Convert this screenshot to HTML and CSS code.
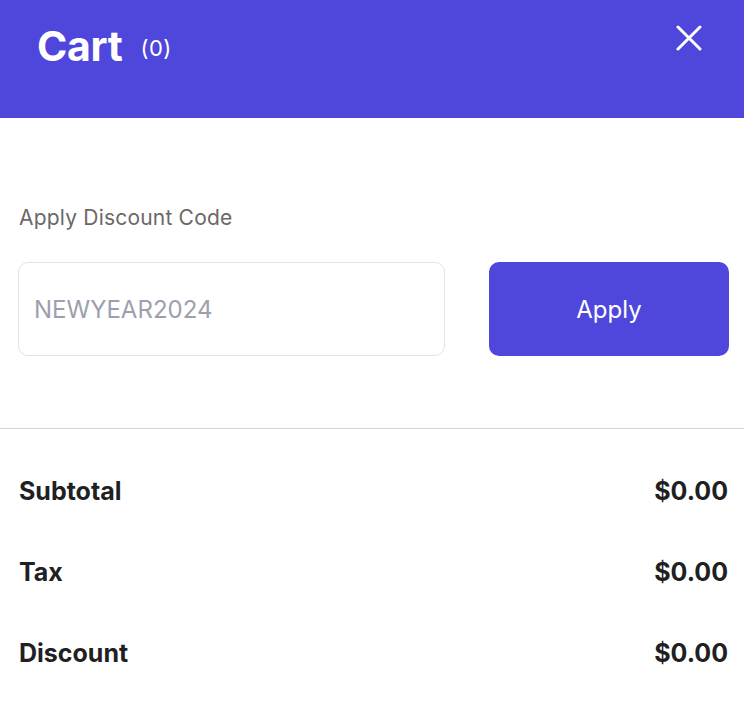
FILE: index.html
```html
<!DOCTYPE html>
<html lang="en">
<head>
<meta charset="utf-8">
<title>Cart</title>
<link rel="stylesheet" href="styles.css">
</head>
<body>
<div class="cart">
  <header class="cart-header">
    <div class="title">
      <h1>Cart</h1>
      <span class="count">(0)</span>
    </div>
    <button class="close" aria-label="Close">
      <svg width="26" height="26" viewBox="0 0 26 26"><path d="M2 2 L24 24 M24 2 L2 24" stroke="#fff" stroke-width="3" stroke-linecap="round"/></svg>
    </button>
  </header>
  <section class="discount">
    <label class="label" for="code">Apply Discount Code</label>
    <div class="discount-row">
      <input id="code" class="code-input" type="text" placeholder="NEWYEAR2024">
      <button class="apply">Apply</button>
    </div>
  </section>
  <section class="summary">
    <div class="row"><span>Subtotal</span><span>$0.00</span></div>
    <div class="row"><span>Tax</span><span>$0.00</span></div>
    <div class="row"><span>Discount</span><span>$0.00</span></div>
  </section>
</div>
</body>
</html>
```
FILE: styles.css
```css
* { box-sizing: border-box; }
html, body { margin: 0; padding: 0; background: #fff; }
body { font-family: Inter, "Noto Sans", sans-serif; }
.cart { width: 744px; }
.cart-header {
  background: #4f46dc;
  height: 118px;
  display: flex;
  justify-content: space-between;
  align-items: flex-start;
  padding: 0 42px 0 37px;
}
.title { display: flex; align-items: center; gap: 18px; padding-top: 22px; }
.title h1 { margin: 0; color: #fff; font-size: 41px; font-weight: 700; line-height: 48px; letter-spacing: -0.3px; }
.count { color: #fff; font-size: 22px; font-weight: 400; line-height: 26px; margin-top: 3px; letter-spacing: 0.5px; }
.close { background: none; border: 0; padding: 0; margin-top: 25px; width: 26px; height: 26px; cursor: pointer; }
.close svg { display: block; }
.discount { padding: 87px 15px 72px 18px; border-bottom: 1px solid #d4d4d8; }
.label { display: block; color: #6b6766; font-size: 21px; line-height: 26px; margin-left: 1px; letter-spacing: 0.2px; }
.discount-row { display: flex; gap: 44px; margin-top: 31px; }
.code-input {
  width: 427px; height: 94px;
  border: 1px solid #e2e2e6; border-radius: 10px;
  padding: 0 15px; font-family: inherit; font-size: 24px; color: #333;
  outline: none;
}
.code-input::placeholder { color: #9ca0ae; }
.apply {
  width: 240px; height: 94px; border: 0; border-radius: 10px;
  background: #4f46dc; color: #fff; font-family: inherit; font-size: 24px; cursor: pointer;
}
.summary { padding: 47px 16px 0 19px; }
.row {
  display: flex; justify-content: space-between;
  font-size: 25px; font-weight: 700; color: #1f1f24; line-height: 30px; margin-bottom: 51px;
}
```
